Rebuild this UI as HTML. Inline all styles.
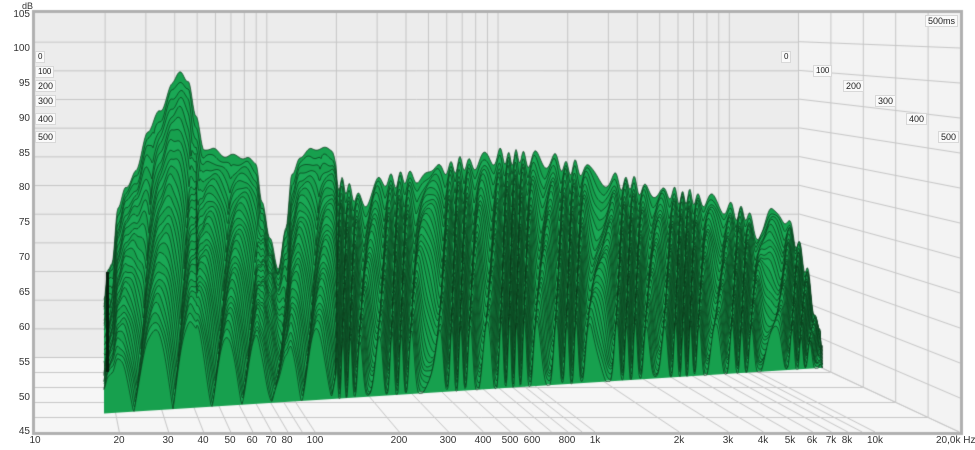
<!DOCTYPE html>
<html><head><meta charset="utf-8">
<style>
html,body{margin:0;padding:0;background:#fff;width:975px;height:450px;overflow:hidden;font-family:"Liberation Sans",sans-serif;}
#c{position:absolute;left:0;top:0;}
.t{position:absolute;font-size:10px;color:#333;line-height:11px;white-space:nowrap;}
.yl{width:28px;text-align:right;left:2px;}
.xl{transform:translateX(-50%);}
.bx{position:absolute;font-size:8px;line-height:10px;background:#fafafa;border:1px solid #d8d8d8;padding:0 2px;color:#222;}
</style></head><body>
<canvas id="c" width="975" height="450"></canvas>
<div class="t" style="left:22px;top:1px;font-size:9px">dB</div>
<div class="t yl" style="top:9px">105</div>
<div class="t yl" style="top:43px">100</div>
<div class="t yl" style="top:78px">95</div>
<div class="t yl" style="top:113px">90</div>
<div class="t yl" style="top:148px">85</div>
<div class="t yl" style="top:182px">80</div>
<div class="t yl" style="top:217px">75</div>
<div class="t yl" style="top:252px">70</div>
<div class="t yl" style="top:287px">65</div>
<div class="t yl" style="top:322px">60</div>
<div class="t yl" style="top:357px">55</div>
<div class="t yl" style="top:392px">50</div>
<div class="t yl" style="top:426px">45</div>
<div class="t xl" style="left:35px;top:435px">10</div>
<div class="t xl" style="left:119px;top:435px">20</div>
<div class="t xl" style="left:168px;top:435px">30</div>
<div class="t xl" style="left:203px;top:435px">40</div>
<div class="t xl" style="left:230px;top:435px">50</div>
<div class="t xl" style="left:252px;top:435px">60</div>
<div class="t xl" style="left:271px;top:435px">70</div>
<div class="t xl" style="left:287px;top:435px">80</div>
<div class="t xl" style="left:315px;top:435px">100</div>
<div class="t xl" style="left:399px;top:435px">200</div>
<div class="t xl" style="left:448px;top:435px">300</div>
<div class="t xl" style="left:483px;top:435px">400</div>
<div class="t xl" style="left:510px;top:435px">500</div>
<div class="t xl" style="left:532px;top:435px">600</div>
<div class="t xl" style="left:567px;top:435px">800</div>
<div class="t xl" style="left:595px;top:435px">1k</div>
<div class="t xl" style="left:679px;top:435px">2k</div>
<div class="t xl" style="left:728px;top:435px">3k</div>
<div class="t xl" style="left:763px;top:435px">4k</div>
<div class="t xl" style="left:790px;top:435px">5k</div>
<div class="t xl" style="left:812px;top:435px">6k</div>
<div class="t xl" style="left:831px;top:435px">7k</div>
<div class="t xl" style="left:847px;top:435px">8k</div>
<div class="t xl" style="left:875px;top:435px">10k</div>
<div class="t" style="left:936px;top:435px">20,0k Hz</div>
<div class="bx" style="left:925px;top:15px;font-size:9px">500ms</div>
<div class="bx" style="left:35px;top:51px">0</div>
<div class="bx" style="left:35px;top:66px">100</div>
<div class="bx" style="left:35px;top:80px;font-size:9px">200</div>
<div class="bx" style="left:35px;top:95px;font-size:9px">300</div>
<div class="bx" style="left:35px;top:113px;font-size:9px">400</div>
<div class="bx" style="left:35px;top:131px;font-size:9px">500</div>
<div class="bx" style="left:781px;top:51px">0</div>
<div class="bx" style="left:813px;top:65px">100</div>
<div class="bx" style="left:843px;top:80px;font-size:9px">200</div>
<div class="bx" style="left:875px;top:95px;font-size:9px">300</div>
<div class="bx" style="left:906px;top:113px;font-size:9px">400</div>
<div class="bx" style="left:938px;top:131px;font-size:9px">500</div>
<script>
var c=document.getElementById('c').getContext('2d');
var L=35,T=13,R=960,B=432,BX=798,BB=357,S=0.826;
function X(f){return 35+280*Math.log10(f/10);}
function BXf(f){return 35+S*(X(f)-35);}
c.fillStyle='#ececec';c.fillRect(L,T,BX-L,BB-T);
c.fillStyle='#f3f3f3';
c.beginPath();c.moveTo(BX,T);c.lineTo(R,T);c.lineTo(R,B);c.lineTo(BX,BB);c.closePath();c.fill();
c.fillStyle='#f6f6f6';
c.beginPath();c.moveTo(L,BB);c.lineTo(BX,BB);c.lineTo(R,B);c.lineTo(L,B);c.closePath();c.fill();
c.strokeStyle='#c6c6c6';c.lineWidth=1;
function ln(a,b,d,e){c.beginPath();c.moveTo(a,b);c.lineTo(d,e);c.stroke();}
var fs=[];
for(var dec=10;dec<=10000;dec*=10){for(var m=1;m<10;m++){var f=dec*m;if(f>10&&f<=20000)fs.push(f);}}
fs.push(20000);
fs.forEach(function(f){var bx=BXf(f),fx=X(f);if(bx<BX)ln(bx+.5,T,bx+.5,BB);ln(bx,BB,fx,B);});
for(var j=1;j<12;j++){var y=T+28.67*j;ln(L,y+.5,BX,y+.5);ln(BX,y,R,T+35*j);}
for(var k=1;k<=5;k++){var t=k/5,y=BB+75*t;ln(L,y+.5,BX+162*t,y+.5);var x=BX+162*t;if(k<5)ln(x+.5,T,x+.5,y);}
ln(BX+.5,T,BX+.5,BB);ln(L,BB+.5,BX,BB+.5);
var P=[[104,300],[108,268],[112,262],[118,210],[126,186],[136,172],[148,130],[160,112],[172,84],[181,72],[188,80],[196,118],[204,148],[212,150],[228,156],[246,157],[256,165],[262,200],[270,240],[278,268],[286,228],[292,176],[300,156],[312,150],[322,147],[332,152],[340,176],[350,185],[365,195],[380,175],[400,172],[430,166],[460,158],[500,150],[540,152],[580,162],[620,175],[660,186],[700,192],[740,205],[762,226],[772,208],[786,212],[796,232],[806,262],[814,300],[820,330],[822,366]];
function E(x){if(x<=P[0][0])return P[0][1];for(var i=1;i<P.length;i++){if(x<=P[i][0]){var a=P[i-1],b=P[i],u=(x-a[0])/(b[0]-a[0]);u=(1-Math.cos(u*Math.PI))/2;return a[1]+(b[1]-a[1])*u;}}return 366;}
function baseF(x){return 413-(x-110)*45/710;}
var K=28,x0=104,x1=823;
for(var k=0;k<=K;k++){
 var t=k/K;
 var shift=(1-t)*22;
 var pts=[];
 for(var x=x0;x<=x1;x+=1){
  var base=baseF(x)-shift;
  var env=E(x);
  var m;
  if(x>336){
   var ph=x*0.5+Math.sin(x*0.11)*2.5+Math.sin(x*0.037)*3+k*0.2;
   var s=0.5+0.5*Math.sin(ph);
   m=Math.pow(s,0.4+1.0*t);
   env+=14*(1-s)*(1-t);
  } else if(x>196){
   m=Math.pow(0.5+0.5*Math.sin(x*0.21+k*0.15),0.15+0.5*t);
  } else {
   m=Math.pow(0.5+0.5*Math.sin(x*0.16-1.2+k*0.12),0.1+0.4*t);
  }
  var d=1-t*0.72;
  var h=(base-env)*d*(1-t*(1-m))+2*Math.sin(x*0.33+k*1.3);
  if(h<0)h=0;
  pts.push([x,base-h]);
 }
 c.beginPath();
 c.moveTo(x0,baseF(x0)-shift);
 pts.forEach(function(p){c.lineTo(p[0],p[1]);});
 c.lineTo(x1,baseF(x1)-shift);c.closePath();
 c.fillStyle=k%2?'#1aa855':'#17a04e';c.fill();
 c.beginPath();pts.forEach(function(p,i){if(i)c.lineTo(p[0],p[1]);else c.moveTo(p[0],p[1]);});
 c.strokeStyle='#0c3a1b';c.lineWidth=0.7;c.stroke();
}
c.fillStyle='#06200e';c.fillRect(106,272,3,100);
c.strokeStyle='#b0b0b0';c.lineWidth=3;
c.strokeRect(L-1.5,T-1.5,R-L+3,B-T+3);
</script>
</body></html>
